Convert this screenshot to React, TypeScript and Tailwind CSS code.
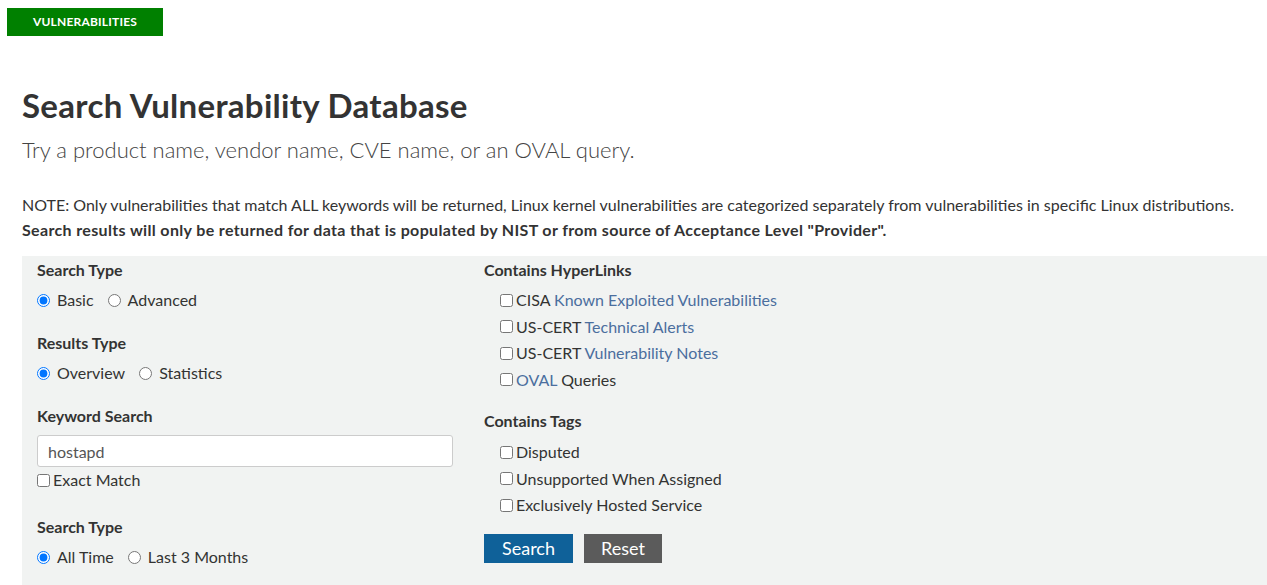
import React from "react";

const F = { fontFamily: "Lato, 'Noto Sans', sans-serif" };

function Radio({ checked, label }: { checked?: boolean; label: string }) {
  return (
    <label className="flex items-center mr-[14px]">
      <input type="radio" defaultChecked={checked} className="m-0 w-[13px] h-[13px] mr-[7px]" readOnly />
      <span>{label}</span>
    </label>
  );
}

function Check({ children }: { children: React.ReactNode }) {
  return (
    <label className="flex items-center h-[26.5px]">
      <input type="checkbox" className="m-0 w-[13px] h-[13px] mr-[3px]" />
      <span>{children}</span>
    </label>
  );
}

const A = ({ children }: { children: React.ReactNode }) => (
  <span className="text-[#4b6e9e]">{children}</span>
);

export default function App() {
  return (
    <div className="w-[1267px] h-[585px] overflow-hidden bg-white text-[#333]" style={F}>
      <div className="pt-[8px] pl-[7px]">
        <div className="w-[156px] h-[28px] bg-[#008000] text-white text-[12px] font-bold flex items-center justify-center tracking-[0.2px]">
          VULNERABILITIES
        </div>
      </div>
      <div className="pl-[22px]">
        <h1 className="mt-[49px] text-[33px] leading-[40px] font-bold text-[#333] tracking-[0.3px]">Search Vulnerability Database</h1>
        <p className="mt-[10px] text-[22px] leading-[30px] font-light text-[#444]">
          Try a product name, vendor name, CVE name, or an OVAL query.
        </p>
        <p className="mt-[28px] text-[16px] leading-[24px]">
          NOTE: Only vulnerabilities that match ALL keywords will be returned, Linux kernel vulnerabilities are categorized separately from vulnerabilities in specific Linux distributions.
        </p>
        <p className="mt-[1px] text-[16px] leading-[24px] font-bold tracking-[0.35px]">
          Search results will only be returned for data that is populated by NIST or from source of Acceptance Level "Provider".
        </p>
        <div className="mt-[14px] bg-[#f1f3f2] h-[330px] flex text-[16px] leading-[24px]">
          <div className="w-[462px] pl-[15px] pt-[2px]">
            <div className="font-bold">Search Type</div>
            <div className="mt-[6px] flex">
              <Radio checked label="Basic" />
              <Radio label="Advanced" />
            </div>
            <div className="mt-[19px] font-bold">Results Type</div>
            <div className="mt-[6px] flex">
              <Radio checked label="Overview" />
              <Radio label="Statistics" />
            </div>
            <div className="mt-[19px] font-bold">Keyword Search</div>
            <input
              className="mt-[7px] w-[416px] h-[32px] bg-white border border-[#ccc] rounded-[3px] px-[10px] text-[#555] outline-none"
              defaultValue="hostapd"
            />
            <label className="mt-[1px] flex items-center">
              <input type="checkbox" className="m-0 w-[13px] h-[13px] mr-[3px]" />
              <span>Exact Match</span>
            </label>
            <div className="mt-[23px] font-bold">Search Type</div>
            <div className="mt-[6px] flex">
              <Radio checked label="All Time" />
              <Radio label="Last 3 Months" />
            </div>
          </div>
          <div className="pt-[2px]">
            <div className="font-bold">Contains HyperLinks</div>
            <div className="mt-[5px] pl-[16px]">
              <Check>CISA <A>Known Exploited Vulnerabilities</A></Check>
              <Check>US-CERT <A>Technical Alerts</A></Check>
              <Check>US-CERT <A>Vulnerability Notes</A></Check>
              <Check><A>OVAL</A> Queries</Check>
            </div>
            <div className="mt-[16px] font-bold">Contains Tags</div>
            <div className="mt-[6px] pl-[16px]">
              <Check>Disputed</Check>
              <Check>Unsupported When Assigned</Check>
              <Check>Exclusively Hosted Service</Check>
            </div>
            <div className="mt-[15px] flex gap-[11px]">
              <button className="w-[89px] h-[29px] bg-[#0f6199] text-white text-[18px]">Search</button>
              <button className="w-[78px] h-[29px] bg-[#5b5b5b] text-white text-[18px]">Reset</button>
            </div>
          </div>
        </div>
      </div>
    </div>
  );
}
